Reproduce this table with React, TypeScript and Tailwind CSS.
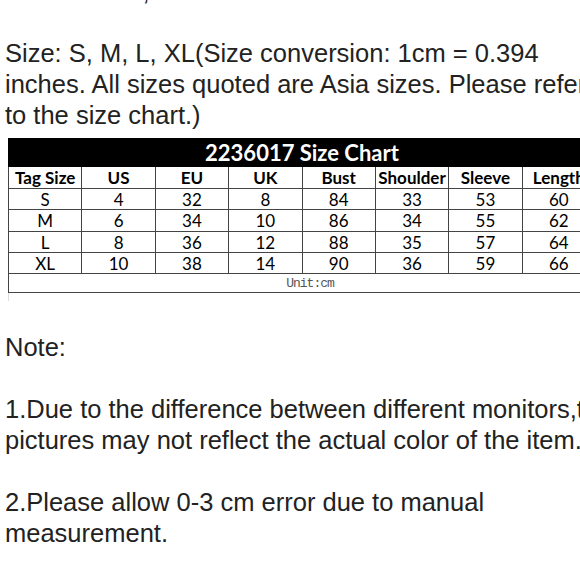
import React from 'react';

const cols = [
  { label: 'Tag Size', w: 'w-[77px]' },
  { label: 'US', w: 'w-[68px]' },
  { label: 'EU', w: 'w-[73px]' },
  { label: 'UK', w: 'w-[53px]' },
  { label: 'Bust', w: 'w-[75px]' },
  { label: 'Shoulder', w: 'w-[80px]' },
  { label: 'Sleeve', w: 'w-[82px]' },
  { label: 'Length', w: 'w-[80px]' },
];

const rows = [
  ['S', '4', '32', '8', '84', '33', '53', '60'],
  ['M', '6', '34', '10', '86', '34', '55', '62'],
  ['L', '8', '36', '12', '88', '35', '57', '64'],
  ['XL', '10', '38', '14', '90', '36', '59', '66'],
];

const rowH = ['h-[21px]', 'h-[22px]', 'h-[21px]', 'h-[21px]'];

const SizeChart: React.FC = () => {
  return (
    <div className="w-[580px] overflow-hidden pl-[8px] mt-[7px] leading-none text-[16px]">
      <table className="border-collapse table-fixed w-[588px] font-['Lato',sans-serif] text-black leading-none">
        <thead>
          <tr>
            <th
              colSpan={8}
              className="bg-black text-white h-[28px] p-0 text-[22px] font-bold leading-none border border-black"
            >
              2236017 Size Chart
            </th>
          </tr>
          <tr className="h-[22px]">
            {cols.map((c) => (
              <th key={c.label} className={`${c.w} border border-[#444] p-0 text-[17px] font-bold leading-none whitespace-nowrap overflow-hidden`}>
                {c.label}
              </th>
            ))}
          </tr>
        </thead>
        <tbody>
          {rows.map((r, i) => (
            <tr key={r[0]} className={rowH[i]}>
              {r.map((v, j) => (
                <td key={j} className="border border-[#444] p-0 text-center text-[17px] leading-none">
                  {v}
                </td>
              ))}
            </tr>
          ))}
          <tr className="h-[19px]">
            <td colSpan={8} className="border border-[#444] p-0 text-center text-[13px] leading-none">
              <span className="inline-block ml-[16px] font-['Liberation_Mono',monospace] text-[13px] tracking-[-1px] text-[#555] leading-none">
                Unit:cm
              </span>
            </td>
          </tr>
        </tbody>
      </table>
      <div className="h-[8px] w-px bg-[#ddd]" />
    </div>
  );
};

const App: React.FC = () => {
  return (
    <div className="w-[580px] h-[580px] overflow-hidden bg-white text-[#222] font-['Liberation_Sans',Arial,sans-serif] text-[25.5px] leading-[31px] pl-[5px]">
      <div className="-mt-[24px]">
        <p className="whitespace-nowrap">Color: Black, Blue</p>
        <p>&nbsp;</p>
        <p className="whitespace-nowrap">Size: S, M, L, XL(Size conversion: 1cm = 0.394</p>
        <p className="whitespace-nowrap">inches. All sizes quoted are Asia sizes. Please refer</p>
        <p className="whitespace-nowrap">to the size chart.)</p>
      </div>
      <div className="-ml-[5px]">
        <SizeChart />
      </div>
      <div className="mt-[31px]">
        <p>Note:</p>
        <p>&nbsp;</p>
        <p className="whitespace-nowrap">1.Due to the difference between different monitors,the</p>
        <p className="whitespace-nowrap">pictures may not reflect the actual color of the item.</p>
        <p>&nbsp;</p>
        <p className="whitespace-nowrap">2.Please allow 0-3 cm error due to manual</p>
        <p className="whitespace-nowrap">measurement.</p>
      </div>
    </div>
  );
};

export default App;
